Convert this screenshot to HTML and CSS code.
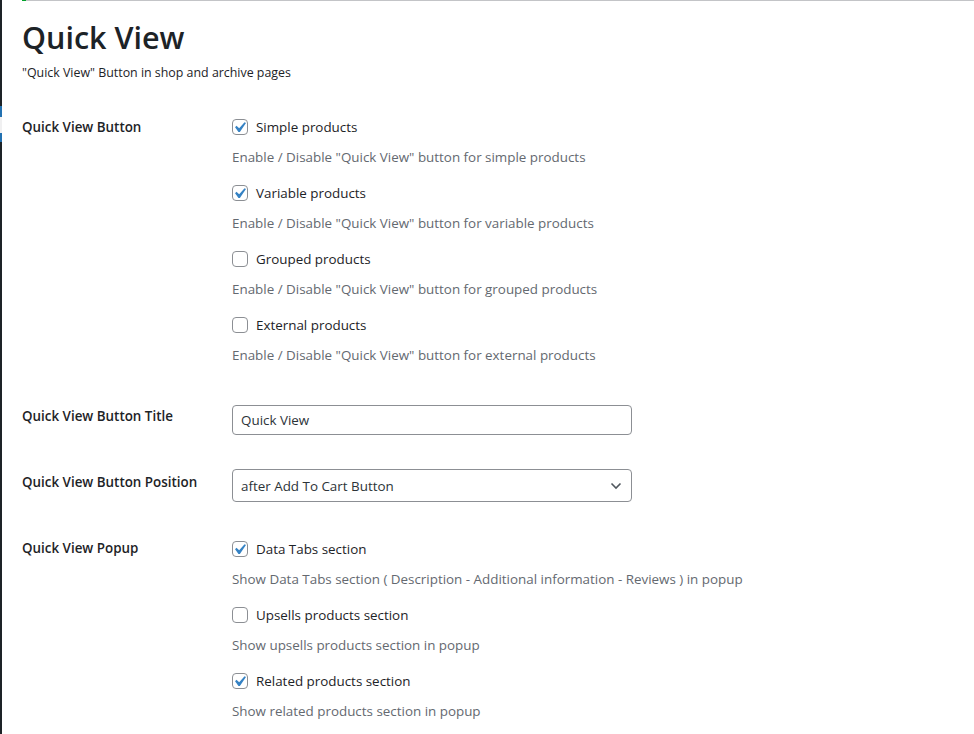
FILE: index.html
```html
<!DOCTYPE html>
<html lang="en">
<head>
<meta charset="utf-8">
<title>Quick View</title>
<link rel="stylesheet" href="styles.css">
</head>
<body>
<div class="admin">
  <div class="menu-edge">
    <span class="edge edge-dark-top"></span>
    <span class="edge edge-blue-a"></span>
    <span class="edge edge-light"></span>
    <span class="edge edge-blue-b"></span>
    <span class="edge edge-dark-bottom"></span>
  </div>
  <main class="content">
    <div class="notice"></div>
    <h1 class="title">Quick View</h1>
    <p class="subtitle">"Quick View" Button in shop and archive pages</p>

    <div class="form">
      <div class="row row-buttons">
        <div class="label">Quick View Button</div>
        <div class="field">
          <div class="option">
            <label class="check"><span class="box checked"><svg viewBox="0 0 16 16" width="16" height="16"><rect x="0.5" y="0.5" width="15" height="15" rx="3.5" class="box-rect"/><path class="tick" transform="translate(-3 -2) scale(1.05)" d="M14.83 4.89l1.34.94-5.81 8.38H9.020L5.78 9.67l1.34-1.25 2.57 2.4z"/></svg></span>Simple products</label>
            <p class="desc">Enable / Disable "Quick View" button for simple products</p>
          </div>
          <div class="option">
            <label class="check"><span class="box checked"><svg viewBox="0 0 16 16" width="16" height="16"><rect x="0.5" y="0.5" width="15" height="15" rx="3.5" class="box-rect"/><path class="tick" transform="translate(-3 -2) scale(1.05)" d="M14.83 4.89l1.34.94-5.81 8.38H9.02L5.78 9.67l1.34-1.25 2.57 2.4z"/></svg></span>Variable products</label>
            <p class="desc">Enable / Disable "Quick View" button for variable products</p>
          </div>
          <div class="option">
            <label class="check"><span class="box"><svg viewBox="0 0 16 16" width="16" height="16"><rect x="0.5" y="0.5" width="15" height="15" rx="3.5" class="box-rect"/></svg></span>Grouped products</label>
            <p class="desc">Enable / Disable "Quick View" button for grouped products</p>
          </div>
          <div class="option">
            <label class="check"><span class="box"><svg viewBox="0 0 16 16" width="16" height="16"><rect x="0.5" y="0.5" width="15" height="15" rx="3.5" class="box-rect"/></svg></span>External products</label>
            <p class="desc">Enable / Disable "Quick View" button for external products</p>
          </div>
        </div>
      </div>

      <div class="row row-title">
        <div class="label label-title">Quick View Button Title</div>
        <div class="field">
          <div class="text-input">Quick View</div>
        </div>
      </div>

      <div class="row row-position">
        <div class="label label-position">Quick View Button Position</div>
        <div class="field">
          <div class="select">
            <span>after Add To Cart Button</span>
            <svg class="chevron" viewBox="0 0 12 8" width="12" height="8"><path d="M1.5 1.5 6 6l4.5-4.5" fill="none" stroke="#50575e" stroke-width="1.6"/></svg>
          </div>
        </div>
      </div>

      <div class="row row-popup">
        <div class="label label-popup">Quick View Popup</div>
        <div class="field">
          <div class="option">
            <label class="check"><span class="box checked"><svg viewBox="0 0 16 16" width="16" height="16"><rect x="0.5" y="0.5" width="15" height="15" rx="3.5" class="box-rect"/><path class="tick" transform="translate(-3 -2) scale(1.05)" d="M14.83 4.89l1.34.94-5.81 8.38H9.02L5.78 9.67l1.34-1.25 2.57 2.4z"/></svg></span>Data Tabs section</label>
            <p class="desc">Show Data Tabs section ( Description - Additional information - Reviews ) in popup</p>
          </div>
          <div class="option">
            <label class="check"><span class="box"><svg viewBox="0 0 16 16" width="16" height="16"><rect x="0.5" y="0.5" width="15" height="15" rx="3.5" class="box-rect"/></svg></span>Upsells products section</label>
            <p class="desc">Show upsells products section in popup</p>
          </div>
          <div class="option">
            <label class="check"><span class="box checked"><svg viewBox="0 0 16 16" width="16" height="16"><rect x="0.5" y="0.5" width="15" height="15" rx="3.5" class="box-rect"/><path class="tick" transform="translate(-3 -2) scale(1.05)" d="M14.83 4.89l1.34.94-5.81 8.38H9.02L5.78 9.67l1.34-1.25 2.57 2.4z"/></svg></span>Related products section</label>
            <p class="desc">Show related products section in popup</p>
          </div>
        </div>
      </div>
    </div>
  </main>
</div>
</body>
</html>
```

FILE: styles.css
```css
* { box-sizing: border-box; }

html, body {
  margin: 0;
  padding: 0;
  background: #ffffff;
  height: 100%;
  overflow: hidden;
}

body {
  font-family: "Open Sans", "Noto Sans", "Liberation Sans", sans-serif;
  font-size: 13.4px;
  color: #1d2327;
}

.admin {
  display: flex;
  min-height: 734px;
}

.menu-edge {
  width: 2px;
  flex: none;
  display: flex;
  flex-direction: column;
}

.edge { display: block; width: 2px; }
.edge-dark-top { height: 106px; background: #1d2327; }
.edge-blue-a { height: 11px; background: #2271b1; }
.edge-light { height: 16px; background: #f0f0f1; }
.edge-blue-b { height: 9px; background: #2271b1; }
.edge-dark-bottom { flex: 1; background: #1d2327; }

.content {
  flex: 1;
  padding-left: 20px;
}

.notice {
  height: 1px;
  background: #c3c4c7;
  border-left: 4px solid #00a32a;
}

.title {
  margin: 16px 0 0;
  font-size: 30.5px;
  line-height: 40px;
  font-weight: 600;
  color: #1d2327;
}

.subtitle {
  margin: 6px 0 0;
  font-size: 12.4px;
  line-height: 20px;
  color: #1d2327;
}

.form {
  display: flex;
  flex-direction: column;
}

.row {
  display: flex;
  align-items: flex-start;
}

.row-buttons { margin-top: 34px; }
.row-title { margin-top: 40px; }
.row-position { margin-top: 34px; }
.row-popup { margin-top: 37px; }

.label {
  width: 210px;
  flex: none;
  font-weight: 600;
  font-size: 13.4px;
  line-height: 20px;
  color: #1d2327;
}

.label-title { margin-top: 1px; }
.label-position { margin-top: 3px; }
.label-popup { margin-top: -1px; }

.field {
  display: flex;
  flex-direction: column;
}

.option + .option { margin-top: 16px; }

.check {
  display: flex;
  align-items: center;
  gap: 8px;
  height: 20px;
  line-height: 20px;
  color: #1d2327;
}

.box {
  width: 16px;
  height: 16px;
  flex: none;
  display: block;
}

.box svg { display: block; }

.box-rect {
  fill: #ffffff;
  stroke: #8c8f94;
  stroke-width: 1;
}

.tick { fill: #3582c4; }

.desc {
  margin: 10px 0 0;
  line-height: 20px;
  color: #646970;
}

.text-input {
  width: 400px;
  height: 30px;
  border: 1px solid #8c8f94;
  border-radius: 4px;
  padding: 0 8px;
  line-height: 28px;
  color: #2c3338;
}

.select {
  width: 400px;
  height: 33px;
  border: 1px solid #8c8f94;
  border-radius: 4px;
  padding: 0 9px 0 8px;
  display: flex;
  align-items: center;
  justify-content: space-between;
  color: #2c3338;
}

.chevron { display: block; }
```
